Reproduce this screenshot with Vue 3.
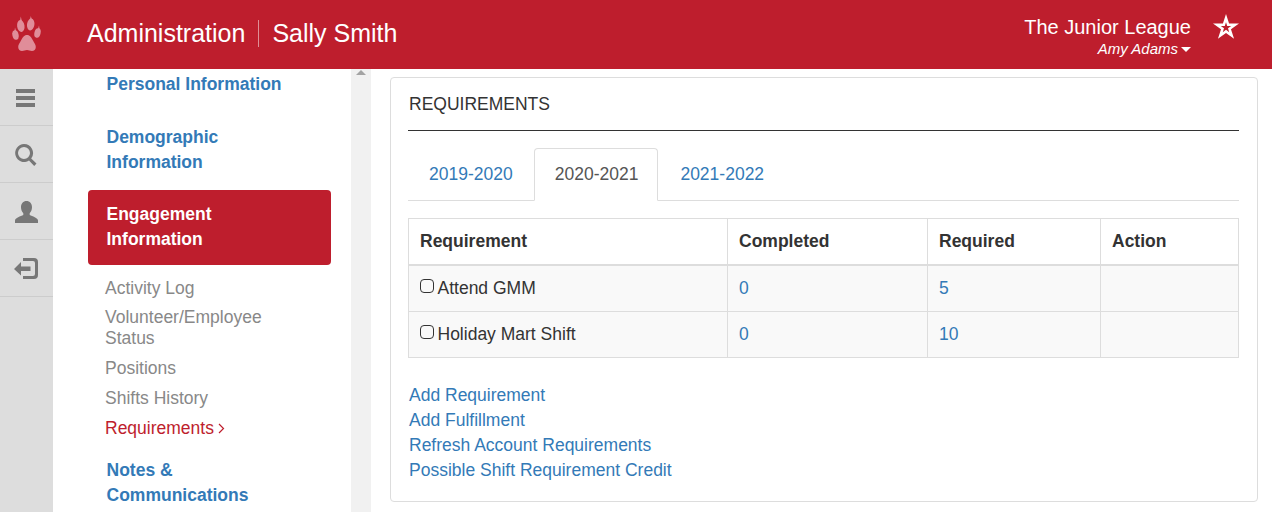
<template>
  <div class="page">
    <header class="topbar">
      <div class="topbar__logo">
        <svg width="30" height="36" viewBox="12 16 30 36" fill="#e08d99">
          <path d="M27 35c-3 0-4.500 2.500-6 5.500-1.200 2.400-2.800 4-2.800 6.500 0 2.700 1.800 4 3.800 4 2 0 3.200-1 5-1s3 1 5 1c2 0 3.800-1.300 3.800-4 0-2.500-1.600-4.100-2.800-6.500-1.500-3-3-5.500-6-5.500z" />
          <ellipse cx="20.800" cy="26" rx="3.700" ry="6" transform="rotate(-8 20.800 26)" />
          <ellipse cx="30.700" cy="24.500" rx="3.700" ry="6" transform="rotate(8 30.700 24.500)" />
          <ellipse cx="15.500" cy="35" rx="3.100" ry="4.800" transform="rotate(-12 15.500 35)" />
          <ellipse cx="37.500" cy="33" rx="3.100" ry="4.800" transform="rotate(14 37.500 33)" />
          <path d="M20 21l.8-4.500 1 4.500zM30 19.500l.8-3.500 1 3.500zM14.500 31l.5-3.500 1 3.500zM38 29l1-3.500.5 3.500z" />
        </svg>
      </div>
      <div class="topbar__title">
        <span>Administration</span>
        <span class="topbar__sep"></span>
        <span>Sally Smith</span>
      </div>
      <div class="topbar__account">
        <div class="topbar__org">The Junior League</div>
        <div class="topbar__user">Amy Adams<i class="caret"></i></div>
      </div>
      <svg class="topbar__star" width="26" height="25" viewBox="0 0 26 25" fill="#fff" fill-rule="evenodd">
        <path d="M13 0l3.070 9.470h9.960l-8.060 5.850 3.080 9.460L13 18.930l-8.050 5.850 3.080-9.460L-.03 9.470h9.960zM13 8.200L11.770 12H7.770L11 14.350 9.770 18.150 13 15.800l3.230 2.350L15 14.350 18.230 12h-4z" />
      </svg>
    </header>

    <div class="layout">
      <nav class="rail">
        <a v-for="icon in railIcons" :key="icon.name" class="rail__item">
          <svg :width="icon.w" :height="icon.h" :viewBox="`0 0 ${icon.w} ${icon.h}`" fill="#777">
            <path :d="icon.d" />
          </svg>
        </a>
      </nav>

      <aside class="sidenav">
        <ul class="sidenav__list">
          <template v-for="item in navItems" :key="item.label">
            <li>
              <a class="pill" :class="{ 'pill--active': item.active }">{{ item.label }}</a>
            </li>
            <li v-if="item.children" class="sub">
              <a
                v-for="child in item.children"
                :key="child"
                class="sub__link"
                :class="{ 'sub__link--active': child === 'Requirements' }"
              >
                {{ child }}<span v-if="child === 'Requirements'" class="sub__arrow">
                  <svg width="7" height="11" viewBox="0 0 7 11" fill="none" stroke="#be1e2d" stroke-width="1.200"><path d="M1 1l4.500 4.500L1 10" /></svg>
                </span>
              </a>
            </li>
          </template>
        </ul>
      </aside>
      <div class="scrollbar"><i class="scrollbar__up"></i></div>

      <main class="main">
        <section class="panel">
          <h2 class="panel__title">REQUIREMENTS</h2>

          <ul class="tabs">
            <li v-for="year in years" :key="year" class="tab" :class="{ 'tab--active': year === '2020-2021' }">{{ year }}</li>
          </ul>

          <table class="table">
            <thead>
              <tr>
                <th class="col-1">Requirement</th>
                <th class="col-2">Completed</th>
                <th class="col-3">Required</th>
                <th>Action</th>
              </tr>
            </thead>
            <tbody>
              <tr v-for="row in rows" :key="row.name">
                <td><span class="check"></span>{{ row.name }}</td>
                <td><a class="link">{{ row.completed }}</a></td>
                <td><a class="link">{{ row.required }}</a></td>
                <td></td>
              </tr>
            </tbody>
          </table>

          <div class="actions">
            <a v-for="action in actions" :key="action" class="link">{{ action }}</a>
          </div>
        </section>
      </main>
    </div>
  </div>
</template>

<script setup>
const railIcons = [
  { name: 'menu', w: 21, h: 20, d: 'M0 2h19v4H0zM0 9h19v4H0zM0 16h19v4H0z' },
  {
    name: 'search',
    w: 23,
    h: 24,
    d: 'M9 2a9 9 0 0 1 7.200 14.400l5.300 5.200-2.300 2.300-5.200-5.300A9 9 0 1 1 9 2zm0 3a6 6 0 1 0 0 12A6 6 0 0 0 9 5z',
  },
  {
    name: 'user',
    w: 23,
    h: 24,
    d: 'M11.500 2c3.300 0 5.500 2.600 5.500 6.200 0 2.500-1 4.600-2.300 6v1.800c2.500 1.200 8.300 3 8.300 5.500V24H0v-2.500c0-2.500 5.800-4.300 8.300-5.500v-1.800C7 12.800 6 10.700 6 8.200 6 4.600 8.200 2 11.500 2z',
  },
  {
    name: 'logout',
    w: 26,
    h: 21,
    d: 'M9 0h11a4 4 0 0 1 4 4v13a4 4 0 0 1-4 4H9v-3h10a2 2 0 0 0 2-2V5a2 2 0 0 0-2-2H9zM7 4v4.500h9.500v4.500H7v4.500L0 11z',
  },
];

const navItems = [
  { label: 'Personal Information' },
  { label: 'Demographic Information' },
  {
    label: 'Engagement Information',
    active: true,
    children: ['Activity Log', 'Volunteer/Employee Status', 'Positions', 'Shifts History', 'Requirements'],
  },
  { label: 'Notes & Communications' },
];

const years = ['2019-2020', '2020-2021', '2021-2022'];

const rows = [
  { name: 'Attend GMM', completed: 0, required: 5 },
  { name: 'Holiday Mart Shift', completed: 0, required: 10 },
];

const actions = [
  'Add Requirement',
  'Add Fulfillment',
  'Refresh Account Requirements',
  'Possible Shift Requirement Credit',
];
</script>

<style>
html,
body {
  height: 100%;
  overflow: hidden;
}
</style>

<style scoped>
.page {
  height: 100vh;
  display: flex;
  flex-direction: column;
  font-family: 'Liberation Sans', Arial, sans-serif;
  font-size: 17.5px;
  line-height: 25px;
  color: #333;
  background: #fff;
}
.topbar {
  flex: none;
  height: 69px;
  display: flex;
  align-items: center;
  background: #be1e2d;
  color: #fff;
}
.topbar__logo {
  width: 87px;
  padding: 0 0 2px 12px;
  box-sizing: border-box;
  display: flex;
}
.topbar__title {
  display: flex;
  align-items: center;
  padding-bottom: 4px;
  font-size: 25px;
  line-height: 34px;
}
.topbar__sep {
  width: 1px;
  height: 27px;
  margin: 2px 13px 0 13px;
  background: rgba(255, 255, 255, 0.5);
}
.topbar__account {
  margin-left: auto;
  padding-top: 2px;
  text-align: right;
}
.topbar__org {
  font-size: 20px;
  line-height: 26px;
}
.topbar__user {
  font-size: 15px;
  line-height: 18px;
  font-style: italic;
}
.caret {
  display: inline-block;
  margin-left: 3px;
  vertical-align: 2px;
  border-top: 5px solid #fff;
  border-left: 5px solid transparent;
  border-right: 5px solid transparent;
}
.topbar__star {
  margin: 0 33px 16px 22px;
  overflow: visible;
}

.layout {
  flex: 1;
  min-height: 0;
  display: flex;
}
.rail {
  flex: none;
  width: 53px;
  background: #ddd;
}
.rail__item {
  display: flex;
  align-items: center;
  justify-content: center;
  height: 56px;
  border-bottom: 1px solid #ccc;
}
.sidenav {
  flex: none;
  width: 298px;
  overflow: hidden;
}
.sidenav__list {
  list-style: none;
  margin: -10px 20px 0 35px;
  padding: 0;
}
.pill {
  display: block;
  margin-bottom: 3px;
  padding: 12.5px 18.5px;
  border-radius: 4px;
  font-weight: bold;
  color: #337ab7;
}
.pill--active {
  padding: 11.5px 18.5px 13.5px;
  background: #be1e2d;
  color: #fff;
}
.sub {
  display: flex;
  flex-direction: column;
  gap: 8.800px;
  padding: 9.500px 20px 6.800px 17px;
  line-height: 21px;
}
.sub__link {
  color: #888;
}
.sub__link--active {
  color: #be1e2d;
}
.sub__arrow {
  margin-left: 4px;
}
.scrollbar {
  flex: none;
  width: 20px;
  background: #f1f1f1;
  display: flex;
  justify-content: center;
  box-sizing: border-box;
}
.scrollbar__up {
  height: 0;
  border-bottom: 5px solid #a3a3a3;
  border-left: 5px solid transparent;
  border-right: 5px solid transparent;
  transform: translateY(1px);
}
.main {
  flex: 1;
  min-width: 0;
  padding: 8px 14px 10px 19px;
}
.panel {
  height: 100%;
  box-sizing: border-box;
  padding: 14px 18px 0 17px;
  border: 1px solid #ddd;
  border-radius: 4px;
}
.panel__title {
  margin: 0;
  padding: 0 1px 13px;
  border-bottom: 1px solid #333;
  font-size: 17.5px;
  line-height: 25px;
  font-weight: normal;
}
.tabs {
  list-style: none;
  display: flex;
  margin: 17px 0 17px;
  padding: 0;
  border-bottom: 1px solid #ddd;
}
.tab {
  margin: 0 1.500px -1px 0;
  padding: 13px 18.5px 13px 20px;
  border: 1px solid transparent;
  border-radius: 4px 4px 0 0;
  color: #337ab7;
}
.tab--active {
  border-color: #ddd;
  border-bottom-color: #fff;
  background: #fff;
  color: #555;
}
.table {
  width: 100%;
  border-collapse: collapse;
  table-layout: fixed;
}
.table th,
.table td {
  box-sizing: border-box;
  padding: 10px 11px;
  border: 1px solid #ddd;
  text-align: left;
}
.table th {
  border-bottom-width: 2px;
}
.table tbody tr {
  background: #f9f9f9;
}
.col-1 {
  width: 319px;
}
.col-2 {
  width: 200px;
}
.col-3 {
  width: 173px;
}
.check {
  display: inline-block;
  box-sizing: border-box;
  width: 14px;
  height: 14px;
  margin-right: 3.500px;
  border: 1.500px solid #333;
  border-radius: 4px;
  vertical-align: 1px;
}
.link {
  color: #337ab7;
}
.actions {
  display: flex;
  flex-direction: column;
  margin-top: 25px;
  padding-left: 1px;
}
</style>
